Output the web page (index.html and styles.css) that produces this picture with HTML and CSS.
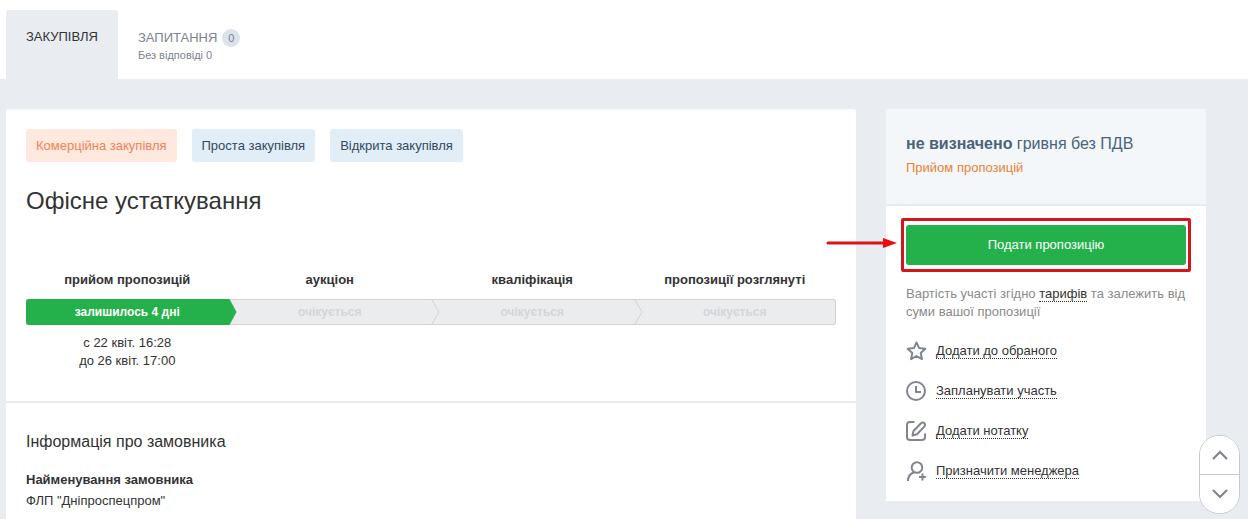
FILE: index.html
```html
<!DOCTYPE html>
<html lang="uk">
<head>
<meta charset="utf-8">
<meta name="viewport" content="width=device-width, initial-scale=1">
<title>Офісне устаткування</title>
<link rel="stylesheet" href="styles.css">
</head>
<body>
<nav class="tabs">
  <a class="tab tab-active" href="#purchase">ЗАКУПІВЛЯ</a>
  <a class="tab tab-questions" href="#questions">
    <span class="tab-title">ЗАПИТАННЯ <span class="count">0</span></span>
    <span class="tab-note">Без відповіді 0</span>
  </a>
</nav>

<div class="layout">
  <main class="card" id="purchase">
    <section class="summary">
      <div class="tags">
        <span class="tag tag-orange">Комерційна закупівля</span>
        <span class="tag">Проста закупівля</span>
        <span class="tag">Відкрита закупівля</span>
      </div>
      <h1 class="title">Офісне устаткування</h1>
      <div class="stage-names">
        <span>прийом пропозицій</span>
        <span>аукціон</span>
        <span>кваліфікація</span>
        <span>пропозиції розглянуті</span>
      </div>
      <div class="stages">
        <div class="stage stage-current">залишилось 4 дні</div>
        <div class="stage">очікується</div>
        <div class="stage"><svg class="chevron" viewBox="0 0 9 26"><path d="M1 1l7 12-7 12"/></svg>очікується</div>
        <div class="stage"><svg class="chevron" viewBox="0 0 9 26"><path d="M1 1l7 12-7 12"/></svg>очікується</div>
      </div>
      <div class="dates"><span>с 22 квіт. 16:28<br>до 26 квіт. 17:00</span></div>
    </section>
    <section class="customer">
      <h2 class="subtitle">Інформація про замовника</h2>
      <dl class="facts">
        <dt>Найменування замовника</dt>
        <dd>ФЛП "Дніпроспецпром"</dd>
      </dl>
    </section>
  </main>

  <aside class="side">
    <div class="price">
      <div class="amount"><b>не визначено</b> гривня без ПДВ</div>
      <div class="status">Прийом пропозицій</div>
    </div>
    <div class="side-body">
      <div class="submit-wrap">
        <button class="submit" type="button">Подати пропозицію</button>
        <span class="frame"></span>
        <svg class="arrow" viewBox="0 0 72 12"><path d="M2 6h58" fill="none" stroke="#d9141a" stroke-width="3" stroke-linecap="round"/><path d="M57 1l14 5-14 5z" fill="#f0060c"/></svg>
      </div>
      <p class="fee">Вартість участі згідно <a class="dotted" href="#rates">тарифів</a> та залежить від суми вашої пропозиції</p>
      <ul class="actions">
        <li><svg class="icon" viewBox="0 0 22 22"><path d="M10.500 2.500l2.600 5.600 6.200.7-4.600 4.200 1.300 6.100-5.500-3.100-5.500 3.100 1.300-6.100-4.600-4.200 6.200-.7z"/></svg><a class="dotted" href="#favourite">Додати до обраного</a></li>
        <li><svg class="icon" viewBox="0 0 22 22"><circle cx="10" cy="11" r="9"/><path d="M10 6v6h5"/></svg><a class="dotted" href="#plan">Запланувати участь</a></li>
        <li><svg class="icon" viewBox="0 0 22 22"><path d="M8.500 2H4a3 3 0 0 0-3 3v12a3 3 0 0 0 3 3h12a3 3 0 0 0 3-3v-3.500M6.500 15.500l1-4.500L15 3.300q1.800-1.500 3.300 0t0 3.300L11 14.300z"/></svg><a class="dotted" href="#note">Додати нотатку</a></li>
        <li><svg class="icon" viewBox="0 0 22 22"><circle cx="11" cy="7.500" r="5.300"/><path d="M2 21c0-5 2.500-7.500 6-8.500M13 17h7M16.500 13.500v7"/></svg><a class="dotted" href="#manager">Призначити менеджера</a></li>
      </ul>
    </div>
  </aside>
</div>

<div class="scroller">
  <button type="button" aria-label="Вгору"><svg viewBox="0 0 16 10"><path d="M1 9l7-7 7 7"/></svg></button>
  <button type="button" aria-label="Вниз"><svg viewBox="0 0 16 10"><path d="M1 1l7 7 7-7"/></svg></button>
</div>
</body>
</html>
```

FILE: styles.css
```css
* { box-sizing: border-box; }

body {
  margin: 0;
  min-height: 100vh;
  display: flex;
  flex-direction: column;
  background: #e9edf2;
  color: #333;
  font: 13px/18px "Liberation Sans", Arial, sans-serif;
}

.tabs {
  display: flex;
  padding: 10px 6px 0;
  background: #fff;
}
.tab {
  padding: 19px 20px 16px;
  color: #7d838d;
  text-decoration: none;
}
.tab-active {
  padding-top: 18px;
  background: #e9edf2;
  border-radius: 3px 3px 0 0;
  color: #333;
}
.tab-title { display: flex; align-items: center; gap: 5px; }
.count {
  width: 18px;
  border-radius: 9px;
  background: #dde3ed;
  font-size: 11px;
  text-align: center;
}
.tab-note { display: block; font-size: 11px; line-height: 16px; }

.layout {
  flex: 1;
  display: flex;
  gap: 30px;
  padding: 30px 42px 0 6px;
}
.card {
  flex: 1;
  background: #fff;
  border-radius: 3px 3px 0 0;
}
.summary {
  padding: 20px 20px 31px;
  border-bottom: 2px solid #e9ecee;
}
.tags { display: flex; gap: 15px; }
.tag {
  padding: 8px 10px 7px;
  border-radius: 3px;
  background: #e1edf7;
  color: #34495e;
}
.tag-orange { background: #ffe9df; color: #ef8354; }
.title {
  margin: 24px 0 55px;
  font-size: 24px;
  line-height: 30px;
  font-weight: 400;
}
.stage-names, .stages, .dates {
  display: grid;
  grid-template-columns: repeat(4, 1fr);
  text-align: center;
}
.stage-names { margin-bottom: 10px; font-weight: 700; }
.stages {
  border-radius: 3px;
  background: #ebecee;
  box-shadow: inset 0 0 0 1px #d0d2d5;
  color: #d3d6da;
  font-size: 12px;
  font-weight: 700;
  line-height: 26px;
}
.stage { position: relative; }
.stage-current { color: #fff; z-index: 0; }
.stage-current::before {
  content: "";
  position: absolute;
  inset: 0 -8px 0 0;
  z-index: -1;
  border-radius: 3px 0 0 3px;
  background: #24b04b;
  clip-path: polygon(0 0, calc(100% - 7px) 0, 100% 50%, calc(100% - 7px) 100%, 0 100%);
}
.chevron {
  position: absolute;
  left: 0;
  top: 0;
  width: 9px;
  height: 26px;
  fill: none;
  stroke: #d3d6da;
}
.dates { margin-top: 9px; }

.customer { padding: 29px 20px 0; }
.subtitle {
  margin: 0 0 17px;
  font-size: 16px;
  line-height: 20px;
  font-weight: 400;
}
.facts { margin: 0; line-height: 21px; }
.facts dt { font-weight: 700; }
.facts dd { margin: 0; }

.side {
  width: 320px;
  align-self: flex-start;
  background: #fff;
}
.price {
  padding: 25px 20px 27px;
  border-bottom: 2px solid #e6ebf0;
  background: #f3f7fa;
  color: #4a637c;
}
.amount { margin-bottom: 5px; font-size: 16px; line-height: 20px; }
.status { color: #ec7f34; }
.side-body { padding: 19px 20px 19px; }
.submit-wrap { position: relative; }
.submit {
  display: block;
  width: 100%;
  height: 40px;
  padding: 0;
  border: 0;
  border-radius: 3px;
  background: #24b04b;
  color: #fff;
  font: inherit;
  cursor: pointer;
}
.frame {
  position: absolute;
  inset: -7px -5px;
  border: 3px solid #d2161c;
  border-radius: 2px;
  pointer-events: none;
}
.arrow {
  position: absolute;
  right: 100%;
  top: 12px;
  width: 72px;
  height: 12px;
  margin-right: 8px;
}
.fee { margin: 20px 0 19px; color: #8a8a8a; }
.dotted {
  border-bottom: 1px dotted #333;
  color: #333;
  line-height: 15px;
  text-decoration: none;
}
.actions {
  display: grid;
  gap: 18px;
  margin: 0;
  padding: 0;
  list-style: none;
}
.actions li { display: flex; align-items: center; gap: 8px; }
.icon {
  width: 22px;
  height: 22px;
  fill: none;
  stroke: #7f868f;
  stroke-width: 2;
  stroke-linejoin: round;
}

.scroller {
  position: fixed;
  right: 8px;
  bottom: 5px;
  width: 41px;
  overflow: hidden;
  border: 1px solid #c6c9ce;
  border-radius: 20px;
  background: #fff;
}
.scroller button {
  display: flex;
  align-items: center;
  justify-content: center;
  width: 100%;
  height: 38px;
  padding: 0;
  border: 0;
  background: #fff;
  cursor: pointer;
}
.scroller button + button { height: 39px; border-top: 1px solid #c6c9ce; }
.scroller svg {
  width: 16px;
  height: 10px;
  fill: none;
  stroke: #7f838a;
  stroke-width: 2;
}
```
